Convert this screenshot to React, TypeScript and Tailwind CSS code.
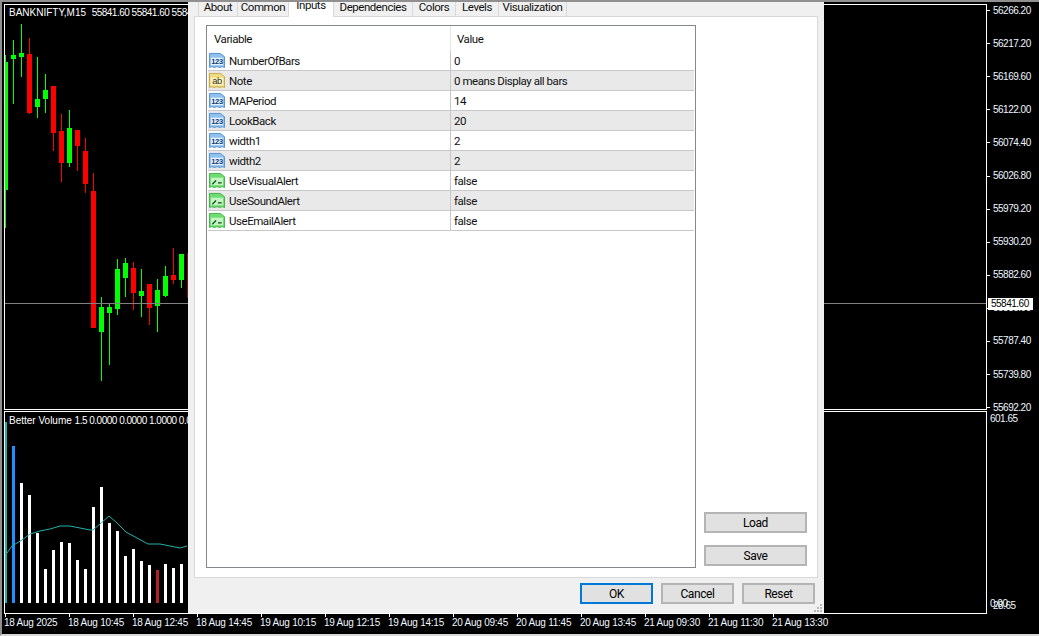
import React from "react";

const uiFont = { fontFamily: 'Roboto, sans-serif' };

// x, wick top, wick bottom, body top, body bottom, up
const candles: [number, number, number, number, number, boolean][] = [
  [5, 55, 228, 62, 190, true],
  [13, 40, 104, 55, 59, true],
  [21, 24, 77, 53, 57, true],
  [29, 38, 114, 54, 113, false],
  [37, 57, 118, 99, 107, true],
  [45, 74, 113, 90, 99, true],
  [53, 86, 151, 86, 133, false],
  [61, 114, 182, 131, 163, false],
  [69, 110, 167, 128, 163, true],
  [77, 130, 171, 130, 146, false],
  [85, 138, 193, 151, 184, false],
  [93, 173, 328, 191, 328, false],
  [101, 297, 381, 307, 332, true],
  [109, 304, 365, 307, 313, true],
  [117, 259, 315, 269, 309, true],
  [125, 258, 297, 263, 278, true],
  [133, 262, 310, 268, 293, false],
  [141, 269, 317, 291, 296, true],
  [149, 284, 325, 284, 308, false],
  [157, 279, 332, 290, 306, true],
  [165, 266, 297, 276, 296, true],
  [173, 248, 284, 275, 280, false],
  [181, 254, 288, 254, 280, true],
];

const volumes = [483, 495, 533, 569, 550, 542, 543, 560, 569, 507, 487, 523, 531, 556, 549, 561, 565, 570, 564, 568, 564];

const maLine =
  "7,143 12,136 22,130 30,124 40,121 50,119 60,116 70,116 80,118 90,120 93,120 100,114 109,106 117,113 126,122 137,128 148,134 160,134 170,136 180,138 187,136";

const prices = ["56266.20", "56217.20", "56169.60", "56122.00", "56074.40", "56026.80", "55979.20", "55930.20", "55882.60", "55835.00", "55787.40", "55739.80", "55692.20"];

const times = ["18 Aug 2025", "18 Aug 10:45", "18 Aug 12:45", "18 Aug 14:45", "19 Aug 10:15", "19 Aug 12:15", "19 Aug 14:15", "20 Aug 09:45", "20 Aug 11:45", "20 Aug 13:45", "21 Aug 09:30", "21 Aug 11:30", "21 Aug 13:30"];

const tabs = [
  { name: "About", w: "w-[40px]" },
  { name: "Common", w: "w-[51px]" },
  { name: "Inputs", w: "w-[45px]" },
  { name: "Dependencies", w: "w-[79px]" },
  { name: "Colors", w: "w-[43px]" },
  { name: "Levels", w: "w-[43px]" },
  { name: "Visualization", w: "w-[68px]" },
];

type Kind = "num" | "text" | "bool";

const rows: { name: string; value: string; kind: Kind }[] = [
  { name: "NumberOfBars", value: "0", kind: "num" },
  { name: "Note", value: "0 means Display all bars", kind: "text" },
  { name: "MAPeriod", value: "14", kind: "num" },
  { name: "LookBack", value: "20", kind: "num" },
  { name: "width1", value: "2", kind: "num" },
  { name: "width2", value: "2", kind: "num" },
  { name: "UseVisualAlert", value: "false", kind: "bool" },
  { name: "UseSoundAlert", value: "false", kind: "bool" },
  { name: "UseEmailAlert", value: "false", kind: "bool" },
];

function CandleChart() {
  return (
    <svg width="981" height="404" viewBox="0 5 981 404" className="block" shapeRendering="crispEdges">
      {candles.map(([x, wt, wb, bt, bb, up]) => (
        <g key={x} fill={up ? "#00ff00" : "#ff0000"} transform="translate(-5 0)">
          <rect x={x} y={wt} width="1" height={wb - wt} />
          <rect x={x === 5 ? 5 : x - 2} y={bt} width={x === 5 ? 3 : 5} height={bb - bt} />
        </g>
      ))}
      <rect x="182" y="253" width="1" height="45" fill="#7a1010" />
      <rect x="0" y="303" width="981" height="1" fill="#808080" />
    </svg>
  );
}

function VolumeChart() {
  return (
    <svg width="981" height="200" viewBox="0 0 981 200" className="block" shapeRendering="crispEdges">
      <rect x="0" y="10" width="2" height="181" fill="#20b2aa" />
      <rect x="7" y="34" width="3" height="157" fill="#1e90ff" />
      {volumes.map((top, i) => (
        <rect key={i} x={15 + i * 8} y={top - 412} width="3" height={603 - top} fill={i === 17 ? "#b22222" : "#ffffff"} />
      ))}
      <polyline points={maLine} transform="translate(-5 -2)" fill="none" stroke="#20b2aa" strokeWidth="1" shapeRendering="auto" />
    </svg>
  );
}

function VarIcon({ kind }: { kind: Kind }) {
  const palette = {
    num: { fill: "#8fc0ee", stroke: "#4f8fd0", inner: "#e4f1fc" },
    text: { fill: "#f0dc80", stroke: "#c4a83c", inner: "#fbf4c8" },
    bool: { fill: "#6fdc6f", stroke: "#3fae4f", inner: "#c4f4c4" },
  }[kind];
  return (
    <svg width="16" height="17" viewBox="0 0 17 18" className="shrink-0">
      <path
        d="M0.5 1.5H12L16.5 5V16.5L14 15.5L11.5 16.5L8.5 15.5L5.5 16.5L3 15.5L0.5 16.5Z"
        fill={palette.fill}
        stroke={palette.stroke}
      />
      <rect x="2" y="6" width="13" height="8" fill={palette.inner} />
      {kind === "num" && (
        <text x="8.5" y="13" textAnchor="middle" fontSize="8" fontWeight="700" fontFamily="Liberation Sans" letterSpacing="-0.4" fill="#123f78">
          123
        </text>
      )}
      {kind === "text" && (
        <text x="8.5" y="13" textAnchor="middle" fontSize="10" fontFamily="Liberation Sans" fill="#3c3208">
          ab
        </text>
      )}
      {kind === "bool" && (
        <path d="M3.5 13L7.5 9M9.5 11.5H13.5" fill="none" stroke="#0f4a16" strokeWidth="1.3" />
      )}
    </svg>
  );
}

function DialogButton({ label, className }: { label: string; className: string }) {
  return (
    <button className={`h-[21px] border-2 bg-[#e1e1e1] text-[12px] leading-none tracking-[-0.4px] text-black ${className}`}>
      {label}
    </button>
  );
}

export default function App() {
  return (
    <div className="relative flex h-[636px] w-[1039px] flex-col overflow-hidden border-t-2 border-b-2 border-l-2 border-t-[#909090] border-b-[#d8d8d8] border-l-[#909090] bg-black text-white" style={{ fontFamily: '"Liberation Sans", sans-serif' }}>
      <div className="flex h-[612px] pl-[2px] pt-[2px]">
        <div className="flex w-[983px] flex-col">
          {/* main chart */}
          <div className="relative h-[406px] border border-white">
            <CandleChart />
            <span className="absolute left-[4px] top-[2px] whitespace-nowrap text-[10px] leading-[12px]">
              BANKNIFTY,M15&nbsp;&nbsp;<span className="tracking-[-0.5px]">55841.60 55841.60 55841.60</span>
            </span>
          </div>
          {/* volume pane */}
          <div className="relative mt-[1px] h-[203px] border border-white">
            <VolumeChart />
            <span className="absolute left-[4px] top-[3px] whitespace-nowrap text-[10px] leading-[12px]">
              Better Volume <span className="tracking-[-0.5px]">1.5 0.0000 0.0000 1.0000 0.0000</span>
            </span>
          </div>
        </div>

        {/* price axis */}
        <div className="relative w-[52px] text-[10px] leading-[12px] tracking-[-0.5px] text-[#eef7ff]">
          <div className="-mt-[10px] flex flex-col">
            {prices.map((p) => (
              <div key={p} className="flex h-[33.1px] shrink-0 items-center">
                <span className="mr-[3px] h-px w-[3px] bg-white" />
                <span>{p}</span>
              </div>
            ))}
          </div>
          <div className="absolute left-[1px] top-[294px] h-[12px] w-[45px] bg-white pl-[3px] text-black">55841.60</div>
          <span className="absolute left-[3px] top-[409px]">601.65</span>
          <span className="absolute left-[3px] top-[594px]">0.00</span>
          <span className="absolute left-[6px] top-[596px]">28.65</span>
        </div>
      </div>

      {/* time axis */}
      <div className="flex pl-[2px] text-[10px] leading-[12px] tracking-[-0.25px] text-[#eef7ff]">
        {times.map((t) => (
          <div key={t} className="w-[64px] shrink-0 whitespace-nowrap">
            <div className="ml-px h-[3px] w-px bg-white" />
            {t}
          </div>
        ))}
      </div>

      {/* properties dialog */}
      <div className="absolute left-[186px] -top-[2px] flex h-[613px] w-[636px] flex-col bg-[#f0f0f0] text-[11.5px] tracking-[-0.45px] text-[#111]" style={uiFont}>
        <div className="flex h-[16px] pl-[10px]">
          {tabs.map((t) => (
            <div
              key={t.name}
              className={`${t.w} flex items-center justify-center whitespace-nowrap border-r border-[#d9d9d9] first:border-l ${
                t.name === "Inputs" ? "z-10 h-[17px] bg-white pb-[6px] leading-[11px]" : "h-[16px] bg-[#f0f0f0]"
              }`}
            >
              {t.name}
            </div>
          ))}
        </div>

        <div className="mx-[6px] flex h-[562px] border border-[#d9d9d9] bg-white pl-[11px] pt-[8px]">
          <div className="h-[543px] w-[490px] border border-[#828790] px-px">
            <div className="flex h-[25px] items-center">
              <div className="w-[242px] pl-[6px] pt-[2px]">Variable</div>
              <div className="h-full w-px bg-[#e5e5e5]" />
              <div className="pl-[6px] pt-[2px]">Value</div>
            </div>
            {rows.map((r, i) => (
              <div key={r.name} className={`flex h-[20px] items-center border-b border-[#c8c8c8] ${i % 2 === 1 ? "bg-[#e9e9e9]" : "bg-white"}`}>
                <div className="flex w-[242px] items-center gap-[4px] pl-px">
                  <VarIcon kind={r.kind} />
                  <span className="pt-[2px]">{r.name}</span>
                </div>
                <div className="h-full w-px bg-[#c8c8c8]" />
                <div className="pl-[3px] pt-[2px]">{r.value}</div>
              </div>
            ))}
          </div>
          <div className="ml-[8px] flex w-[103px] flex-col justify-end gap-[12px] pb-[11px]">
            <DialogButton label="Load" className="w-[103px] border-[#b4b4b4]" />
            <DialogButton label="Save" className="w-[103px] border-[#b4b4b4]" />
          </div>
        </div>

        <div className="relative flex flex-1 items-start justify-end gap-[8px] pr-[9px] pt-[5px]">
          <DialogButton label="OK" className="w-[73px] border-[#0078d7]" />
          <DialogButton label="Cancel" className="w-[73px] border-[#b4b4b4]" />
          <DialogButton label="Reset" className="w-[73px] border-[#b4b4b4]" />
          <div className="absolute bottom-[1px] right-[2px] grid grid-cols-3 gap-px">
            {[0, 1, 2, 3, 4, 5, 6, 7, 8].map((n) => (
              <span key={n} className={`h-[2px] w-[2px] ${n === 0 || n === 1 || n === 3 ? "bg-transparent" : "bg-[#b8b8b8]"}`} />
            ))}
          </div>
        </div>
      </div>
    </div>
  );
}
